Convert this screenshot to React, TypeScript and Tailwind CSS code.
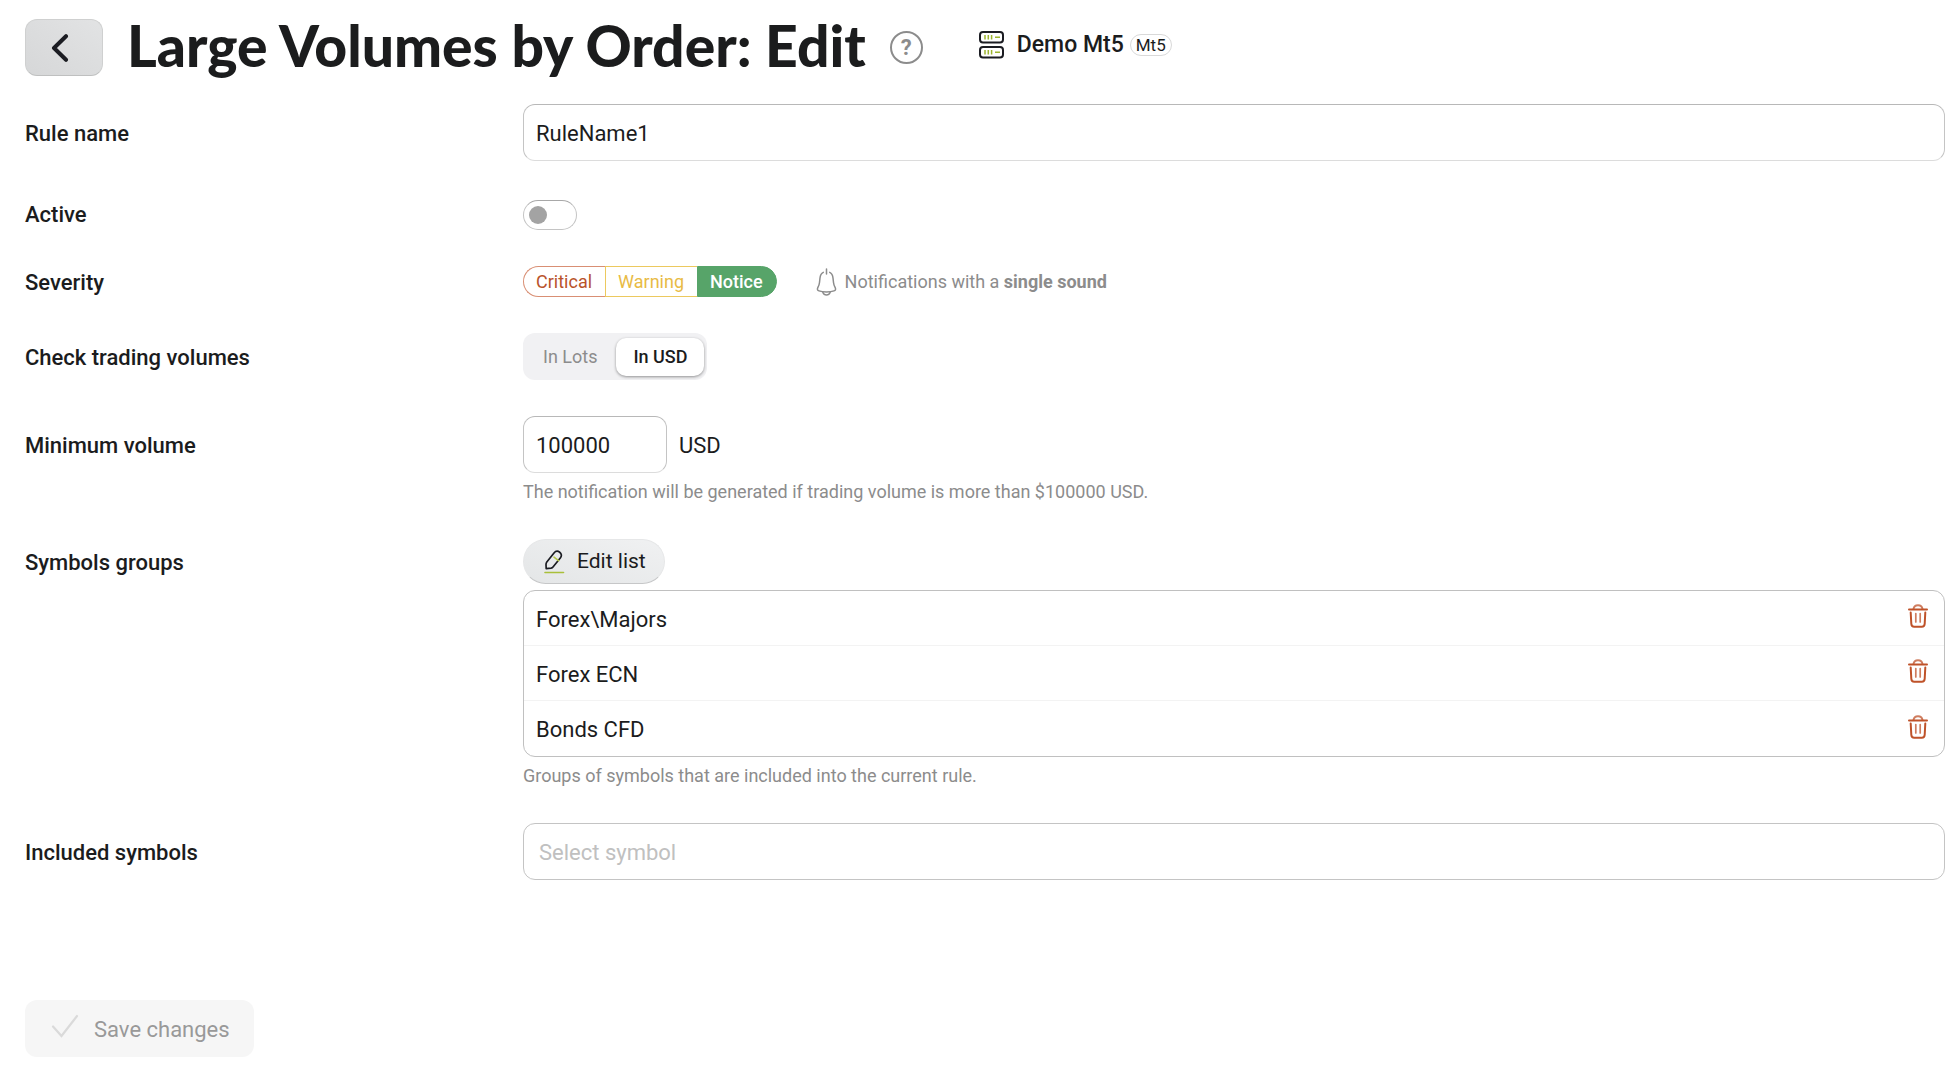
import React, { useState } from 'react';
import clsx from 'clsx';

interface FormRowProps {
  label: string;
  htmlFor?: string;
  labelClass: string;
  children: React.ReactNode;
}

const SEVERITIES = [
  {
    id: 'critical',
    label: 'Critical',
    base: 'rounded-l-full border-r-0 border-[#d98f74] text-[#b9532b]',
    active: 'bg-[#b9532b] text-white',
  },
  {
    id: 'warning',
    label: 'Warning',
    base: 'border-r-0 border-[#ecc95f] text-[#e8bb45]',
    active: 'bg-[#e8bb45] text-white',
  },
  {
    id: 'notice',
    label: 'Notice',
    base: 'rounded-r-full border-[#57a469] text-[#57a469]',
    active: 'bg-[#57a469] font-medium text-white',
  },
];

const UNITS = ['In Lots', 'In USD'];

const INPUT_CLASS =
  'h-[57px] rounded-xl border border-[#c4c4c4] border-t-[#b8b8b8] border-b-[#dcdcdc] bg-white px-3 pt-[2px] text-[22px] text-[#1b1c1d] outline-none';

function FormRow({ label, htmlFor, labelClass, children }: FormRowProps) {
  return (
    <div className="flex items-start">
      <label
        htmlFor={htmlFor}
        className={clsx('flex w-[498px] shrink-0 items-center pt-[2px] text-[22px] font-medium', labelClass)}
      >
        {label}
      </label>
      <div className="min-w-0 flex-1">{children}</div>
    </div>
  );
}

function Hint({ children }: { children: React.ReactNode }) {
  return <p className="mt-2 text-[18px] leading-[22px] text-[#8c8c8c]">{children}</p>;
}

function ServerIcon() {
  return (
    <svg width="26" height="28" viewBox="0 0 26 28" fill="none">
      <rect x="1" y="1" width="23" height="10.5" rx="3" stroke="#1b1c22" strokeWidth="2" />
      <rect x="1" y="16" width="23" height="10.5" rx="3" stroke="#1b1c22" strokeWidth="2" />
      <path
        d="M6 4v4.5M9.3 4v4.5M12.6 4v4.5M16 6.3h5M6 19v4.5M9.3 19v4.5M12.6 19v4.5M16 21.3h5"
        stroke="#9db52f"
        strokeWidth="1.5"
      />
    </svg>
  );
}

function BellIcon() {
  return (
    <svg width="21" height="28" viewBox="0 0 21 28" fill="none" stroke="#8c8c8c" strokeWidth="1.5" strokeLinecap="round">
      <path d="M10.5 1v5" />
      <path d="M7.3 4.4C5 5.4 4.3 7.3 4 10l-.5 4.5c-.2 2.3-.8 3.5-1.7 5.2-.8 1.6-.3 2.7 1.2 3.2 2 .8 4.6 1.1 7.5 1.1s5.500-.3 7.500-1.100c1.500-.5 2-1.600 1.200-3.200-.9-1.700-1.500-2.900-1.700-5.200L17 10c-.3-2.700-1-4.600-3.300-5.600" />
      <path d="M6.8 24.200c.7 1.800 2 2.800 3.700 2.800s3-1 3.700-2.800" />
    </svg>
  );
}

function PencilIcon() {
  return (
    <svg width="21" height="24" viewBox="0 0 21 24" fill="none" strokeLinecap="round" strokeLinejoin="round">
      <path
        d="M2.200 18.700L2 14.500c0-1 .2-1.700.8-2.500l7.200-9c1.500-1.900 3.800-2.200 5.700-.8s2.200 3.700.8 5.500l-7.300 9c-.6.8-1.200 1.200-2.200 1.400z"
        stroke="#1b1c22"
        strokeWidth="1.7"
      />
      <path d="M10 7.200l4.500 3.500" stroke="#b5c84a" strokeWidth="1.6" />
      <path d="M1 22.500h18.500" stroke="#a9bf3a" strokeWidth="1.6" />
    </svg>
  );
}

function TrashIcon() {
  return (
    <svg width="20" height="24" viewBox="0 0 20 24" fill="none" stroke="#bf5229" strokeWidth="2" strokeLinecap="round" strokeLinejoin="round">
      <path d="M1 5.500h18" />
      <path d="M5.500 5C5.800 2.500 7.200 1.200 10 1.200s4.200 1.300 4.500 3.800" opacity="0.75" />
      <path d="M2.700 8.500l.6 11.200c.1 2 1 3 2.900 3h7.600c1.900 0 2.800-1 2.900-3l.6-11.200" />
      <path d="M7.800 9.500v8.500M12.200 9.500v8.500" strokeWidth="1.7" opacity="0.75" />
    </svg>
  );
}

export default function App() {
  const [ruleName, setRuleName] = useState('RuleName1');
  const [active, setActive] = useState(false);
  const [severity, setSeverity] = useState('notice');
  const [unit, setUnit] = useState('In USD');
  const [volume, setVolume] = useState('100000');
  const [groups, setGroups] = useState(['Forex\\Majors', 'Forex ECN', 'Bonds CFD']);

  return (
    <main className="bg-white pt-[19px] pr-[15px] pb-3 pl-[25px] font-['Roboto',sans-serif] text-[#1b1c1d]">
      <header className="flex items-center">
        <button
          type="button"
          aria-label="Back"
          className="flex h-[57px] w-[78px] items-center justify-center rounded-xl border border-[#cfd0d0] border-b-[#bfc0c0] bg-linear-to-bl from-[#e2e3e4] to-[#d6d7d8] pr-2"
        >
          <svg width="18" height="28" viewBox="0 0 18 28" fill="none">
            <path d="M15 2.200L3 14l12 11.800" stroke="#1b1c22" strokeWidth="4" strokeLinecap="round" strokeLinejoin="round" />
          </svg>
        </button>
        <h1 className="ml-6 pb-1 font-['Lato',sans-serif] text-[57px] leading-[53px] font-black text-[#1b1c1d]">
          Large Volumes by Order: Edit
        </h1>
        <button
          type="button"
          aria-label="Help"
          className="ml-6 flex size-[33px] items-center justify-center rounded-full border-2 border-[#8c8c8c] text-[22px] leading-none font-bold text-[#8c8c8c]"
        >
          ?
        </button>
        <div className="mb-[6px] ml-14 flex items-center">
          <ServerIcon />
          <span className="ml-3 text-[23px] leading-7 font-medium">Demo Mt5</span>
          <span className="ml-[6px] rounded-full border border-[#d9d9d9] px-[5px] text-[17px] leading-5">Mt5</span>
        </div>
      </header>

      <form className="mt-7 flex flex-col gap-9" onSubmit={(e) => e.preventDefault()}>
        <FormRow label="Rule name" htmlFor="rule-name" labelClass="h-[57px]">
          <input
            id="rule-name"
            type="text"
            value={ruleName}
            onChange={(e) => setRuleName(e.target.value)}
            className={clsx(INPUT_CLASS, 'block w-full')}
          />
        </FormRow>

        <FormRow label="Active" htmlFor="active" labelClass="h-[33px]">
          <div className="flex h-[33px] items-end">
            <input
              id="active"
              type="checkbox"
              role="switch"
              checked={active}
              onChange={(e) => setActive(e.target.checked)}
              className="flex h-[30px] w-[54px] appearance-none items-center rounded-full border border-[#c4c4c4] border-t-[#a8a8a8] bg-white px-[5px] before:size-[18px] before:rounded-full before:bg-[#a3a3a3] checked:justify-end checked:before:bg-[#57a469]"
            />
          </div>
        </FormRow>

        {/* Severity */}
        <FormRow label="Severity" labelClass="h-[31px]">
          <div className="flex h-[31px] items-center">
            <div role="radiogroup" aria-label="Severity" className="flex">
              {SEVERITIES.map((item) => (
                <label
                  key={item.id}
                  className={clsx(
                    'relative flex h-[31px] cursor-pointer items-center border pr-[13px] pl-3 text-[18px]',
                    item.base,
                    severity === item.id && item.active,
                  )}
                >
                  <input
                    type="radio"
                    name="severity"
                    checked={severity === item.id}
                    onChange={() => setSeverity(item.id)}
                    className="sr-only"
                  />
                  {item.label}
                </label>
              ))}
            </div>
            <div className="ml-[39px] flex items-center gap-2 text-[18px] text-[#8c8c8c]">
              <BellIcon />
              <span>
                Notifications with a <b className="font-bold">single sound</b>
              </span>
            </div>
          </div>
        </FormRow>

        <FormRow label="Check trading volumes" labelClass="h-[47px]">
          <div
            role="radiogroup"
            aria-label="Check trading volumes"
            className="flex h-[47px] w-fit items-center gap-[2px] rounded-xl bg-[#f1f1f3] px-[3px]"
          >
            {UNITS.map((item) => (
              <label
                key={item}
                className={clsx(
                  'relative flex h-[38px] cursor-pointer items-center rounded-[10px] px-[17px] text-[18px]',
                  unit === item
                    ? 'bg-white font-medium text-[#1b1c1d] shadow-[0_1px_3px_rgba(0,0,0,0.4)]'
                    : 'text-[#8c8c8c]',
                )}
              >
                <input
                  type="radio"
                  name="unit"
                  checked={unit === item}
                  onChange={() => setUnit(item)}
                  className="sr-only"
                />
                {item}
              </label>
            ))}
          </div>
        </FormRow>

        <FormRow label="Minimum volume" htmlFor="min-volume" labelClass="h-[57px]">
          <div className="flex items-center gap-3 text-[22px]">
            <input
              id="min-volume"
              type="text"
              inputMode="numeric"
              value={volume}
              onChange={(e) => setVolume(e.target.value)}
              className={clsx(INPUT_CLASS, 'w-36')}
            />
            <span className="pt-[2px]">USD</span>
          </div>
          <Hint>The notification will be generated if trading volume is more than ${volume} USD.</Hint>
        </FormRow>

        {/* Symbols groups */}
        <FormRow label="Symbols groups" labelClass="h-[45px]">
          <button
            type="button"
            className="flex h-[45px] items-center gap-3 rounded-full border border-[#e6e7e8] border-b-[#c6c7c8] bg-linear-to-bl from-[#f0f1f2] to-[#e4e6e7] pr-[18px] pl-5 text-[21px]"
          >
            <PencilIcon />
            Edit list
          </button>
          <ul className="mt-[6px] divide-y divide-[#f3f3f3] rounded-xl border border-[#c0c0c0]">
            {groups.map((group) => (
              <li key={group} className="flex h-[55px] items-center justify-between px-3 pt-[2px] text-[22px]">
                {group}
                <button
                  type="button"
                  aria-label={`Remove ${group}`}
                  className="mr-1 pb-[6px]"
                  onClick={() => setGroups(groups.filter((g) => g !== group))}
                >
                  <TrashIcon />
                </button>
              </li>
            ))}
          </ul>
          <Hint>Groups of symbols that are included into the current rule.</Hint>
        </FormRow>

        <FormRow label="Included symbols" htmlFor="symbols" labelClass="h-[57px]">
          <input
            id="symbols"
            type="text"
            placeholder="Select symbol"
            className="block h-[57px] w-full rounded-xl border border-[#c4c4c4] bg-white px-[15px] pt-[2px] text-[22px] outline-none placeholder:text-[#c0c0c0]"
          />
        </FormRow>

        <button
          type="submit"
          disabled
          className="mt-21 flex h-[57px] items-center gap-[15px] self-start rounded-xl bg-[#f6f6f6] pt-[2px] pr-6 pl-[26px] text-[22px] text-[#999999]"
        >
          <svg width="28" height="24" viewBox="0 0 28 24" fill="none" className="mb-2">
            <path d="M2 12.500l8.500 9.500L26 2" stroke="#dadada" strokeWidth="2.200" strokeLinecap="round" />
          </svg>
          Save changes
        </button>
      </form>
    </main>
  );
}
